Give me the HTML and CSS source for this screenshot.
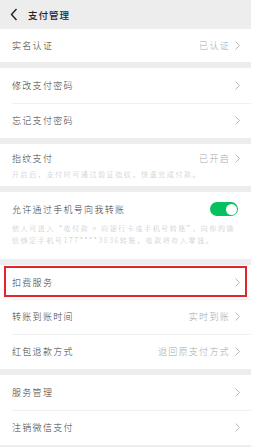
FILE: index.html
```html
<!DOCTYPE html>
<html lang="zh-CN">
<head>
  <meta charset="UTF-8" />
  <meta name="viewport" content="width=device-width, initial-scale=1.0"/>
  <title>支付管理</title>
  <link rel="stylesheet" href="styles.css">
</head>
<body>
<div id="app">
  <header class="topbar">
    <svg class="back" width="8" height="13" viewBox="0 0 8 13"><polyline points="6.5,1 1.5,6.5 6.5,12" fill="none" stroke="#222" stroke-width="1.4"/></svg>
    <h1>支付管理</h1>
  </header>

  <div class="group">
    <div class="row first">
      <span class="label">实名认证</span>
      <span class="value">已认证</span>
      <svg class="arrow" width="5" height="9" viewBox="0 0 5 9"><polyline points="0.5,0.5 4.5,4.5 0.5,8.5" fill="none" stroke="#b2b2b2" stroke-width="0.9"/></svg>
    </div>
  </div>

  <div class="group">
    <div class="row">
      <span class="label">修改支付密码</span>
      <svg class="arrow" width="5" height="9" viewBox="0 0 5 9"><polyline points="0.5,0.5 4.5,4.5 0.5,8.5" fill="none" stroke="#b2b2b2" stroke-width="0.9"/></svg>
    </div>
    <div class="row">
      <span class="label">忘记支付密码</span>
      <svg class="arrow" width="5" height="9" viewBox="0 0 5 9"><polyline points="0.5,0.5 4.5,4.5 0.5,8.5" fill="none" stroke="#b2b2b2" stroke-width="0.9"/></svg>
    </div>
  </div>

  <div class="group">
    <div class="block finger">
      <div class="block-head">
        <span class="label">指纹支付</span>
        <span class="value">已开启</span>
        <svg class="arrow" width="5" height="9" viewBox="0 0 5 9"><polyline points="0.5,0.5 4.5,4.5 0.5,8.5" fill="none" stroke="#b2b2b2" stroke-width="0.9"/></svg>
      </div>
      <p class="note">开启后，支付时可通过验证指纹，快速完成付款。</p>
    </div>
  </div>

  <div class="group">
    <div class="block phone">
      <div class="block-head">
        <span class="label">允许通过手机号向我转账</span>
        <span class="switch on"></span>
      </div>
      <p class="note">他人可进入“收付款 &gt; 向银行卡或手机号转账”，向你的微信绑定手机号177****3036转账，收款将存入零钱。</p>
    </div>
  </div>

  <div class="group">
    <div class="row marked">
      <span class="label">扣费服务</span>
      <svg class="arrow" width="5" height="9" viewBox="0 0 5 9"><polyline points="0.5,0.5 4.5,4.5 0.5,8.5" fill="none" stroke="#b2b2b2" stroke-width="0.9"/></svg>
    </div>
    <div class="row">
      <span class="label">转账到账时间</span>
      <span class="value">实时到账</span>
      <svg class="arrow" width="5" height="9" viewBox="0 0 5 9"><polyline points="0.5,0.5 4.5,4.5 0.5,8.5" fill="none" stroke="#b2b2b2" stroke-width="0.9"/></svg>
    </div>
    <div class="row">
      <span class="label">红包退款方式</span>
      <span class="value">退回原支付方式</span>
      <svg class="arrow" width="5" height="9" viewBox="0 0 5 9"><polyline points="0.5,0.5 4.5,4.5 0.5,8.5" fill="none" stroke="#b2b2b2" stroke-width="0.9"/></svg>
    </div>
  </div>

  <div class="group">
    <div class="row">
      <span class="label">服务管理</span>
      <svg class="arrow" width="5" height="9" viewBox="0 0 5 9"><polyline points="0.5,0.5 4.5,4.5 0.5,8.5" fill="none" stroke="#b2b2b2" stroke-width="0.9"/></svg>
    </div>
    <div class="row">
      <span class="label">注销微信支付</span>
      <svg class="arrow" width="5" height="9" viewBox="0 0 5 9"><polyline points="0.5,0.5 4.5,4.5 0.5,8.5" fill="none" stroke="#b2b2b2" stroke-width="0.9"/></svg>
    </div>
  </div>
</div>
</body>
</html>
```

FILE: styles.css
```css
body {
  margin: 0;
  background-color: #ffffff;
  font-family: "Noto Sans CJK SC", "Noto Sans", sans-serif;
  font-weight: 300;
  color: #333;
}

#app {
  width: 251px;
  height: 447px;
  overflow: hidden;
  background-color: #ededed;
}

.topbar {
  height: 29px;
  display: flex;
  align-items: center;
  padding-left: 10px;
  gap: 10px;
}

.topbar h1 {
  margin: 0;
  font-size: 9.5px;
  font-weight: 500;
  letter-spacing: 1px;
  color: #222;
}

.group {
  background-color: #fff;
  margin-bottom: 6px;
}

.row {
  position: relative;
  height: 35px;
  display: flex;
  align-items: center;
  padding: 0 11px 0 12px;
}

.row.first {
  height: 33px;
}

.row + .row::before {
  content: "";
  position: absolute;
  top: 0;
  left: 12px;
  right: 0;
  height: 1px;
  background-color: #f0f0f0;
}

.label {
  flex: 1;
  font-size: 9px;
  letter-spacing: 1.3px;
  color: #3a3a3a;
}

.value {
  font-size: 9px;
  letter-spacing: 1.3px;
  color: #a8a8a8;
  margin-right: 5px;
}

.arrow {
  display: block;
}

.block {
  padding: 0 11px 0 12px;
}

.block-head {
  display: flex;
  align-items: center;
  height: 14px;
}

.note {
  margin: 0;
  font-size: 7px;
  line-height: 12px;
  letter-spacing: 1.6px;
  color: #c2c2c2;
}

.finger {
  padding-top: 7px;
  padding-bottom: 6px;
}

.finger .note {
  margin-top: 3px;
}

.phone {
  padding-top: 10px;
  padding-bottom: 13px;
}

.phone .block-head {
  padding-right: 2px;
}

.phone .note {
  margin-top: 6px;
  padding-right: 4px;
}

.switch {
  position: relative;
  width: 28px;
  height: 14px;
  border-radius: 7px;
  background-color: #07c160;
}

.switch::after {
  content: "";
  position: absolute;
  top: 1.5px;
  right: 1.5px;
  width: 11px;
  height: 11px;
  border-radius: 50%;
  background-color: #fff;
}

.marked {
  height: 34px;
}

.marked::after {
  content: "";
  position: absolute;
  top: 1px;
  left: 4px;
  right: 4px;
  bottom: 2px;
  border: 2px solid #e2262b;
}
```
